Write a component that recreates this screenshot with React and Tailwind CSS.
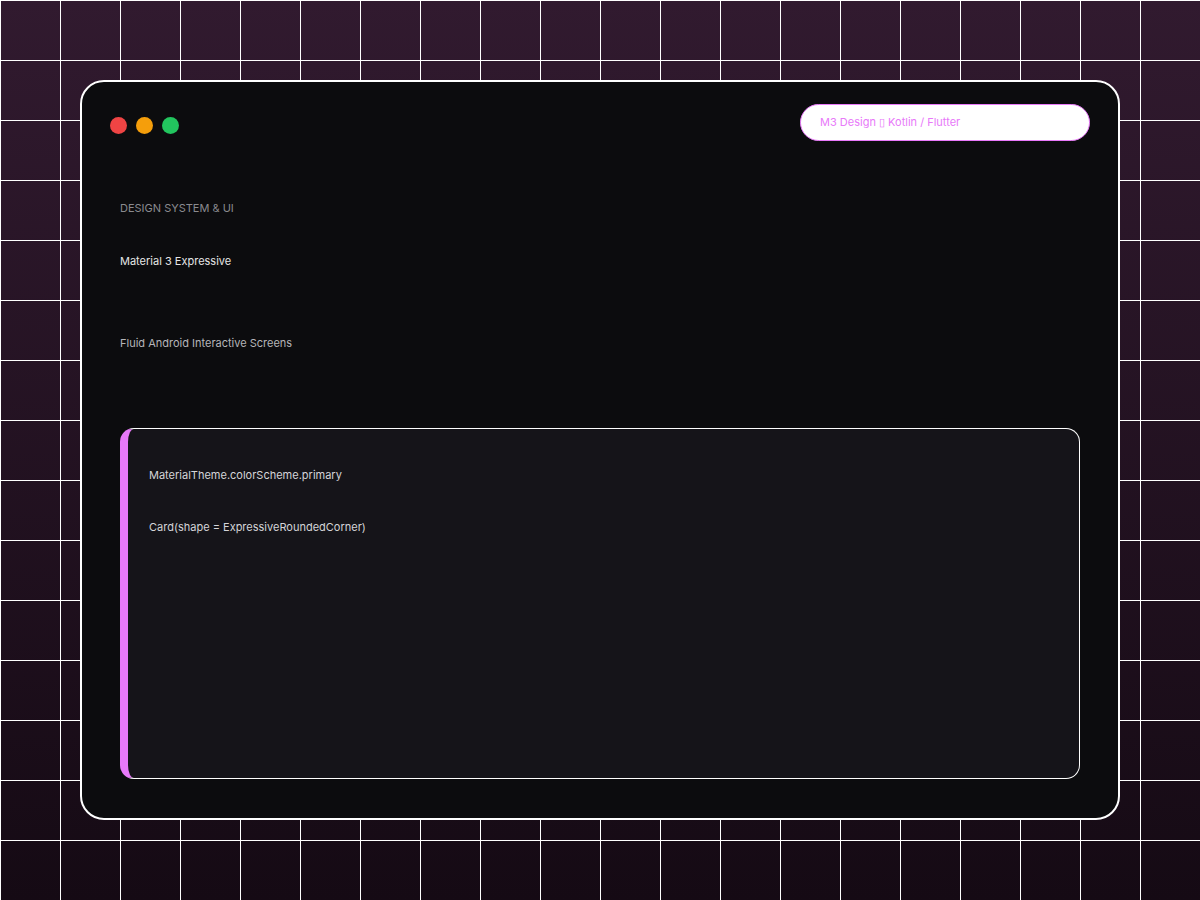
export default function App() {
  return (
    <div className="relative w-[1200px] h-[900px] overflow-hidden bg-[linear-gradient(180deg,#311a2f,#150a14)]" style={{fontFamily: 'Inter, "Noto Sans", sans-serif'}}>
      <div className="absolute inset-0 bg-[linear-gradient(90deg,#ffffff_1px,transparent_1px),linear-gradient(180deg,#ffffff_1px,transparent_1px)] bg-[length:60px_60px]" />
      <div className="relative pt-[80px] px-[80px]">
        <div className="h-[740px] rounded-[24px] border-2 border-white bg-[#0c0c0e] px-[38px] pt-[22px]">
          <div className="flex items-center justify-between">
            <div className="flex gap-[9px] mt-[6px] ml-[-10px]">
              <div className="w-[17px] h-[17px] rounded-full bg-[#ef4444]" />
              <div className="w-[17px] h-[17px] rounded-full bg-[#f59e0b]" />
              <div className="w-[17px] h-[17px] rounded-full bg-[#22c55e]" />
            </div>
            <div className="w-[290px] h-[37px] rounded-full bg-white border border-[#e879f9] flex items-center px-[19px] text-[11px] text-[#e879f9] mr-[-10px]">
              M3 Design ▯ Kotlin / Flutter
            </div>
          </div>
          <div className="mt-[59px] text-[11px] text-[#8a8a8e]">DESIGN SYSTEM &amp; UI</div>
          <div className="mt-[36px] text-[11px] text-[#e5e5e5]">Material 3 Expressive</div>
          <div className="mt-[66px] text-[11px] text-[#b5b5b8]">Fluid Android Interactive Screens</div>
          <div className="mt-[76px] h-[351px] rounded-[14px] border border-white border-l-[8px] border-l-[#e879f9] bg-[#151419] pl-[21px] pt-[38px]">
            <div className="text-[11px] text-[#d4d4d8]">MaterialTheme.colorScheme.primary</div>
            <div className="mt-[36px] text-[11px] text-[#d4d4d8]">Card(shape = ExpressiveRoundedCorner)</div>
          </div>
        </div>
      </div>
    </div>
  );
}
